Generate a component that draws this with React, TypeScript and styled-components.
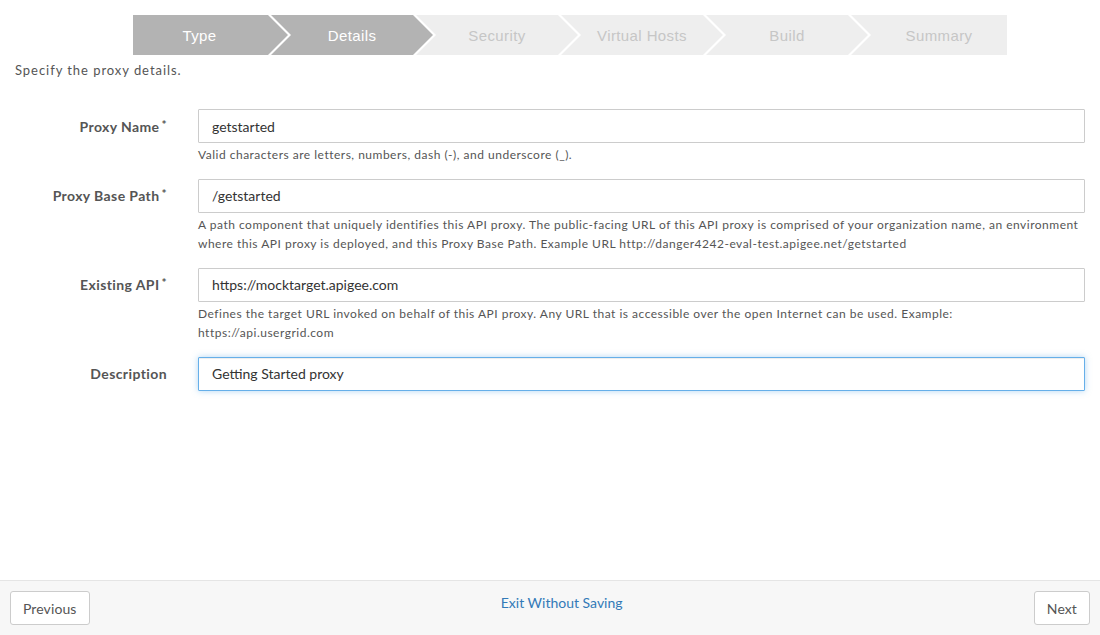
import React from "react";
import styled, { createGlobalStyle } from "styled-components";

const Global = createGlobalStyle`
  html, body { margin: 0; padding: 0; background: #fff; }
  body { font-family: Lato, "Open Sans", sans-serif; color: #555; }
  * { box-sizing: border-box; }
`;

const Page = styled.div`
  width: 1100px;
  height: 635px;
  display: flex;
  flex-direction: column;
  background: #fff;
`;

const Main = styled.div`
  flex: 1;
  display: flex;
  flex-direction: column;
`;

const Steps = styled.div`
  display: flex;
  width: 874px;
  height: 40px;
  margin: 15px 0 0 133px;
`;

const Step = styled.div<{ $active: boolean; $first: boolean; $last: boolean }>`
  flex: none;
  width: ${(p) => (p.$first ? "155px" : p.$last ? "156px" : "162px")};
  height: 40px;
  display: flex;
  align-items: center;
  justify-content: center;
  margin-left: ${(p) => (p.$first ? "0" : "-17px")};
  padding-left: ${(p) => (p.$first ? "0" : "20px")};
  padding-right: ${(p) => (p.$last ? "0" : p.$first ? "22px" : "20px")};
  background: ${(p) => (p.$active ? "#b3b3b3" : "#eeeeee")};
  color: ${(p) => (p.$active ? "#ffffff" : "#c6c6c6")};
  font-family: "Liberation Sans", Arial, sans-serif;
  font-size: 15px;
  letter-spacing: 0.4px;
  white-space: nowrap;
  clip-path: polygon(
    0 0,
    ${(p) => (p.$last ? "100% 0, 100% 100%" : "calc(100% - 20px) 0, 100% 50%, calc(100% - 20px) 100%")},
    0 100%${(p) => (p.$first ? "" : ", 20px 50%")}
  );
`;

const Intro = styled.p`
  margin: 6px 0 0 15px;
  font-size: 13px;
  line-height: 18px;
  color: #555;
  letter-spacing: 0.95px;
`;

const Form = styled.div`
  display: grid;
  grid-template-columns: 153px 1fr;
  column-gap: 30px;
  padding: 30px 15px 0 15px;
`;

const Label = styled.label`
  grid-column: 1;
  height: 34px;
  display: flex;
  align-items: center;
  justify-content: flex-end;
  padding-right: 1px;
  font-weight: 700;
  font-size: 14px;
  color: #555;
  letter-spacing: 0.4px;
`;

const Req = styled.span`
  margin-left: 2px;
  font-size: 12px;
  position: relative;
  top: -2px;
`;

const Field = styled.div<{ $mb: number }>`
  grid-column: 2;
  margin-bottom: ${(p) => p.$mb}px;
`;

const Input = styled.input<{ $focus?: boolean }>`
  display: block;
  width: 100%;
  height: 34px;
  padding: 0 13px;
  border: 1px solid ${(p) => (p.$focus ? "#66afe9" : "#cccccc")};
  border-radius: 1px;
  font-family: Lato, sans-serif;
  font-size: 14px;
  color: #333;
  background: #fff;
  outline: none;
  box-shadow: ${(p) =>
    p.$focus ? "inset 0 1px 1px rgba(0,0,0,.075), 0 0 6px rgba(102,175,233,.5)" : "none"};
`;

const Help = styled.div`
  margin-top: 2px;
  font-size: 12px;
  line-height: 19.5px;
  color: #555;
  letter-spacing: 0.5px;
`;

const Footer = styled.div`
  height: 55px;
  border-top: 1px solid #e5e5e5;
  background: #f7f7f7;
  display: flex;
  align-items: flex-start;
  justify-content: space-between;
  padding: 10px 10px 0 10px;
`;

const Button = styled.button`
  height: 34px;
  padding: 0 12px;
  background: #fff;
  border: 1px solid #cccccc;
  border-radius: 3px;
  font-family: Lato, sans-serif;
  font-size: 14px;
  letter-spacing: 0.1px;
  color: #555;
`;

const ExitLink = styled.a`
  margin-top: 3px;
  font-size: 14px;
  color: #337ab7;
  text-decoration: none;
  cursor: pointer;
`;

const steps = ["Type", "Details", "Security", "Virtual Hosts", "Build", "Summary"];

export default function App() {
  return (
    <Page>
      <Global />
      <Main>
        <Steps>
          {steps.map((s, i) => (
            <Step key={s} $active={i < 2} $first={i === 0} $last={i === steps.length - 1}>
              {s}
            </Step>
          ))}
        </Steps>
        <Intro>Specify the proxy details.</Intro>
        <Form>
          <Label>
            Proxy Name<Req>*</Req>
          </Label>
          <Field $mb={14}>
            <Input defaultValue="getstarted" />
            <Help>Valid characters are letters, numbers, dash (-), and underscore (_).</Help>
          </Field>
          <Label>
            Proxy Base Path<Req>*</Req>
          </Label>
          <Field $mb={14}>
            <Input defaultValue="/getstarted" />
            <Help>
              A path component that uniquely identifies this API proxy. The public-facing URL of this API proxy is
              comprised of your organization name, an environment where this API proxy is deployed, and this Proxy
              Base Path. Example URL http://danger4242-eval-test.apigee.net/getstarted
            </Help>
          </Field>
          <Label>
            Existing API<Req>*</Req>
          </Label>
          <Field $mb={14}>
            <Input defaultValue="https://mocktarget.apigee.com" />
            <Help>
              Defines the target URL invoked on behalf of this API proxy. Any URL that is accessible over the open
              Internet can be used. Example: https://api.usergrid.com
            </Help>
          </Field>
          <Label>Description</Label>
          <Field $mb={0}>
            <Input $focus defaultValue="Getting Started proxy" />
          </Field>
        </Form>
      </Main>
      <Footer>
        <Button>Previous</Button>
        <ExitLink>Exit Without Saving</ExitLink>
        <Button>Next</Button>
      </Footer>
    </Page>
  );
}
